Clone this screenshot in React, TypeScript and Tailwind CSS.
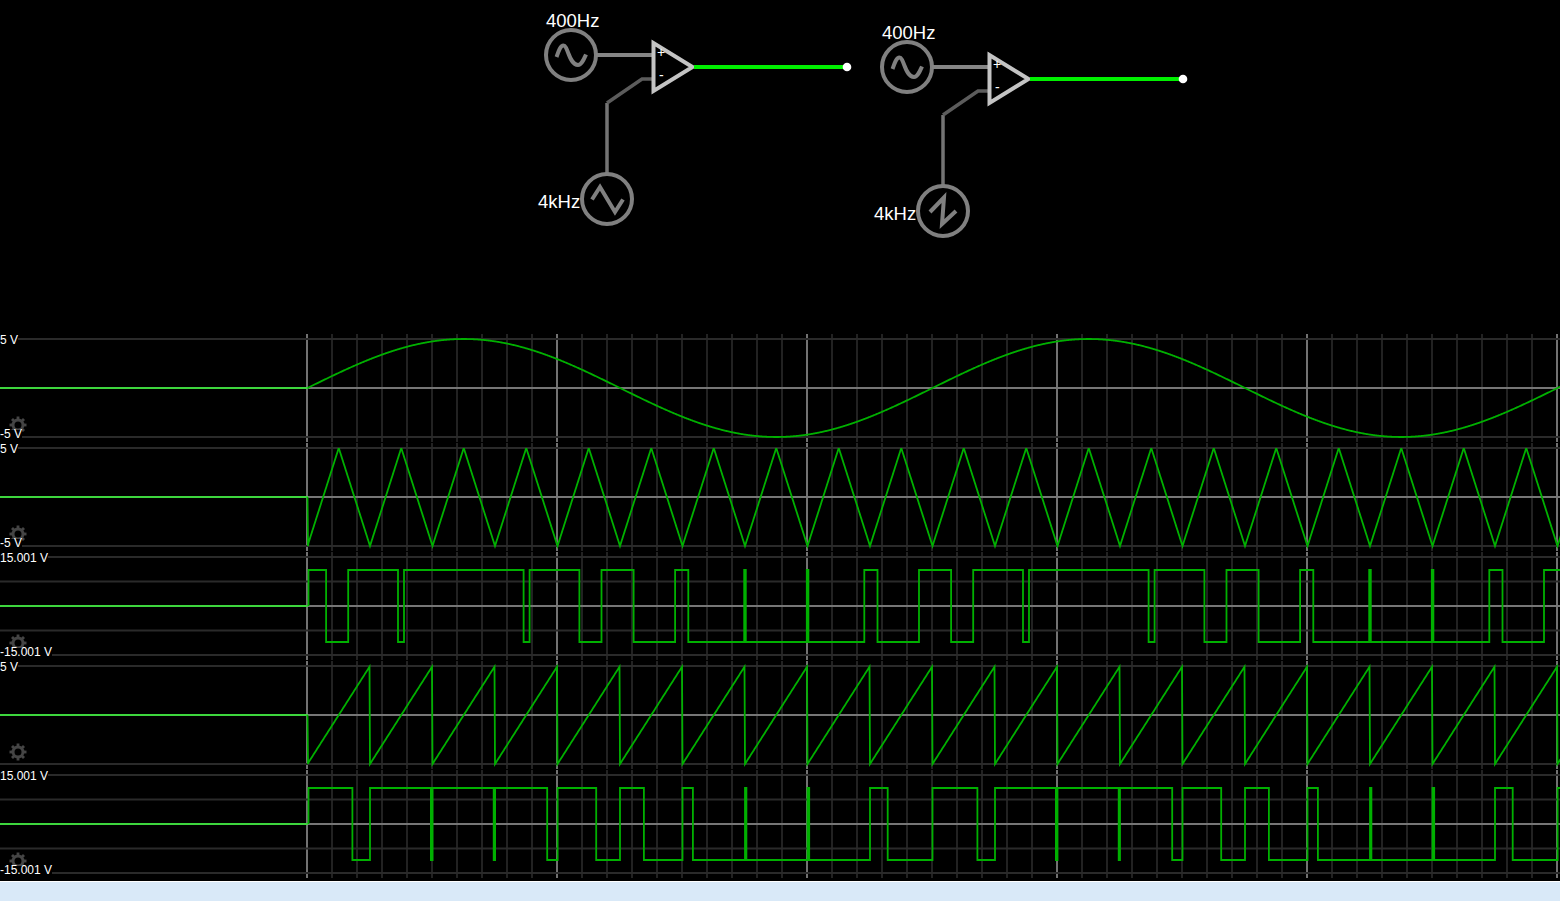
import React from "react";

const PERIOD_SLOW = 625;
const PERIOD_FAST = 62.5;
const X0 = 307.5;
const WIDTH = 1560;
const ROW_H = 108;
const MID = 54;

const sine = (t: number) => Math.sin((2 * Math.PI * t) / PERIOD_SLOW);

const tri = (t: number) => {
    const p = (t % PERIOD_FAST) / PERIOD_FAST;
    return p < 0.5 ? -1 + 4 * p : 3 - 4 * p;
};

const saw = (t: number) => -1 + (2 * (t % PERIOD_FAST)) / PERIOD_FAST;

// analog traces, amplitude 49px around the middle line
function analogPath(fn: (t: number) => number) {
    let d = `M${X0} ${MID} L${X0 + 0.5} ${MID - fn(0) * 49}`;
    for (let t = 1; X0 + t <= WIDTH + 2; t += 0.5) {
        d += ` L${(X0 + t).toFixed(2)} ${(MID - fn(t) * 49).toFixed(2)}`;
    }
    return d;
}

// comparator output: high while the 400Hz input is above the 4kHz input
function comparatorPath(fn: (t: number) => number) {
    const HIGH = 18;
    const LOW = 90;
    let state = true;
    let d = `M${X0 + 1} ${MID} L${X0 + 1} ${HIGH}`;
    for (let t = 1; X0 + t <= WIDTH + 2; t += 0.1) {
        const next = sine(t) > fn(t);
        if (next !== state) {
            const x = (X0 + t).toFixed(2);
            d += ` L${x} ${state ? HIGH : LOW} L${x} ${next ? HIGH : LOW}`;
            state = next;
        }
    }
    d += ` L${WIDTH + 2} ${state ? HIGH : LOW}`;
    return d;
}

const rows = [
    { top: "5 V", bottom: "-5 V", quarters: false, d: analogPath(sine) },
    { top: "5 V", bottom: "-5 V", quarters: false, d: analogPath(tri) },
    { top: "15.001 V", bottom: "-15.001 V", quarters: true, d: comparatorPath(tri) },
    { top: "5 V", bottom: "", quarters: false, d: analogPath(saw) },
    { top: "15.001 V", bottom: "-15.001 V", quarters: true, d: comparatorPath(saw) },
];

const gridX = Array.from({ length: 51 }, (_, i) => 307 + i * 25);

function Gear() {
    return (
        <svg width="18" height="18" viewBox="0 0 18 18" className="absolute left-[9px] top-[82px]">
            <circle cx="9" cy="9" r="5" fill="none" stroke="#454545" strokeWidth="3" />
            {[0, 45, 90, 135, 180, 225, 270, 315].map((a) => (
                <rect key={a} x="7.6" y="0.5" width="2.8" height="4" fill="#454545" transform={`rotate(${a} 9 9)`} />
            ))}
        </svg>
    );
}

function ScopeRow({ top, bottom, quarters, d }: { top: string; bottom: string; quarters: boolean; d: string }) {
    return (
        <div className="relative h-[108px] w-full">
            <svg width={WIDTH} height={ROW_H} className="block">
                {gridX.map((x, i) => (
                    <rect key={x} x={x - 1} y={0} width={2} height={ROW_H} fill={i % 10 === 0 ? "#727272" : "#222222"} />
                ))}
                <rect x={0} y={4} width={WIDTH} height={2} fill="#2a2a2a" />
                <rect x={0} y={102} width={WIDTH} height={2} fill="#2a2a2a" />
                {quarters && <rect x={0} y={28.5} width={WIDTH} height={2} fill="#2a2a2a" />}
                {quarters && <rect x={0} y={77.5} width={WIDTH} height={2} fill="#2a2a2a" />}
                <rect x={307} y={53} width={WIDTH - 307} height={2} fill="#767676" />
                <rect x={0} y={53} width={308} height={2} fill="#3dd63d" />
                <path d={d} fill="none" stroke="#00b000" strokeWidth="1.8" />
            </svg>
            <Gear />
            <div className="absolute inset-0 flex flex-col items-start justify-between pt-px pb-[3px] font-['Liberation_Sans',sans-serif] text-[12px] text-white">
                <span className="bg-black leading-[11px]">{top}</span>
                {bottom && <span className="bg-black leading-[9px]">{bottom}</span>}
            </div>
        </div>
    );
}

function Circuit({ lower, className }: { lower: string; className: string }) {
    return (
        <div className={`relative h-[240px] w-[336px] shrink-0 ${className}`}>
            <svg width="336" height="240" className="block">
                <circle cx="41" cy="55" r="25" fill="none" stroke="#808080" strokeWidth="4" />
                <path
                    d="M26.5 57 C29 50 30.5 45.5 33.5 45.5 C38 45.5 39 65 48 65 C51.5 65 53.5 60 56 54.5"
                    fill="none"
                    stroke="#808080"
                    strokeWidth="4"
                />
                <path d="M66 55 H122" stroke="#858585" strokeWidth="4" />
                <path d="M77 173 V103" fill="none" stroke="#747474" strokeWidth="3.5" />
                <path d="M77 103 L112 79 H122" fill="none" stroke="#5c5c5c" strokeWidth="3.5" />
                <path d="M123.5 43 V91 L162.5 67 Z" fill="black" stroke="#c4c4c4" strokeWidth="4" />
                <path d="M164 67 H317" stroke="#00f000" strokeWidth="4" />
                <circle cx="317" cy="67" r="4.3" fill="white" />
                <circle cx="77" cy="199" r="25" fill="none" stroke="#808080" strokeWidth="4" />
                <path d={lower} fill="none" stroke="#808080" strokeWidth="4" />
            </svg>
            <span className="absolute left-[16px] top-[11px] font-['Liberation_Sans',sans-serif] text-[18.5px] leading-[20px] text-white">
                400Hz
            </span>
            <span className="absolute left-[8px] top-[192px] font-['Liberation_Sans',sans-serif] text-[18.5px] leading-[20px] text-white">
                4kHz
            </span>
            <span className="absolute left-[127px] top-[45px] font-['Liberation_Sans',sans-serif] text-[14px] leading-[14px] text-white">
                +
            </span>
            <span className="absolute left-[129px] top-[68px] font-['Liberation_Sans',sans-serif] text-[14px] leading-[14px] text-white">
                -
            </span>
        </div>
    );
}

export default function App() {
    return (
        <main className="flex h-screen w-full flex-col overflow-hidden bg-black">
            <section className="flex h-[334px] pl-[530px]">
                <Circuit lower="M62 199.5 L70 187 L85 212 L93 199.5" className="" />
                <Circuit lower="M64 200 L78 185.5 L76 212 L90 199" className="mt-3" />
            </section>
            <section className="flex flex-col gap-px">
                {rows.map((row, i) => (
                    <ScopeRow key={i} top={row.top} bottom={row.bottom} quarters={row.quarters} d={row.d} />
                ))}
            </section>
            <footer className="mt-auto h-5 border-t border-white bg-[#d9e9f8]" />
        </main>
    );
}
